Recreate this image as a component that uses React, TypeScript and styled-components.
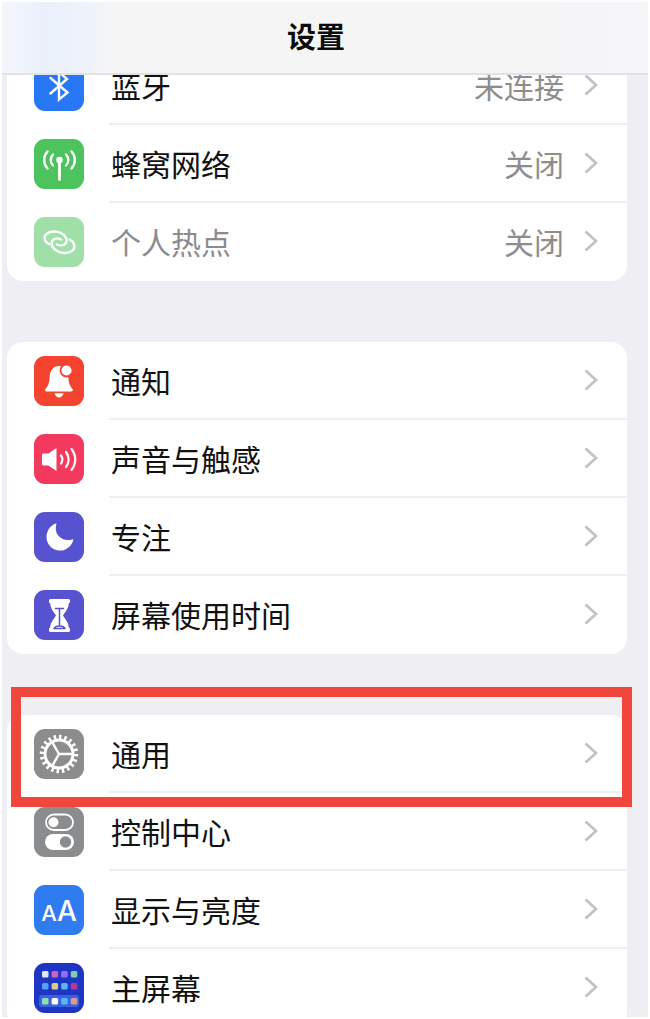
import React from "react";
import styled, { createGlobalStyle } from "styled-components";

const GlobalStyle = createGlobalStyle`
  *, *::before, *::after { box-sizing: border-box; }
  body {
    margin: 0;
    background: #fff;
    color: #111;
    font-family: "Noto Sans CJK SC", "Noto Sans", sans-serif;
  }
`;

const Screen = styled.div`
  display: flex;
  flex-direction: column;
  height: 100vh;
  padding: 2px;
  background: #fff;
`;

const Header = styled.header`
  display: flex;
  align-items: center;
  justify-content: center;
  flex: none;
  height: 73px;
  padding: 0 18px 6px 0;
  border-bottom: 2px solid #e2e2e5;
  background: linear-gradient(90deg, #f4f6fc 0, #ebf1fc 40px, #edf2fb 80px, #f5f5f6 110px, #f5f5f6 82%, #f6f6fa 100%);
`;

const Title = styled.h1`
  margin: 0;
  font-size: 29px;
  line-height: 40px;
  font-weight: 700;
  color: #0c0c0c;
`;

const Content = styled.main`
  flex: 1;
  min-height: 0;
  overflow-y: auto;
  scrollbar-width: none;
  padding: 0 21px 0 5px;
  background: #efeff3;
`;

const Groups = styled.div`
  display: flex;
  flex-direction: column;
  gap: 61px;
  margin-top: -28px;
`;

const Group = styled.ul`
  margin: 0;
  padding: 0;
  list-style: none;
  border-radius: 16px;
  background: #fff;
`;

const Item = styled.li`
  position: relative;
`;

const RowLink = styled.a<{ $dimmed?: boolean }>`
  display: flex;
  align-items: center;
  gap: 25px;
  height: 78px;
  padding-left: 27px;
  color: ${(p) => (p.$dimmed ? "#8b8b8d" : "#111")};
  text-decoration: none;
`;

const RowBody = styled.span<{ $line: boolean }>`
  display: flex;
  align-items: center;
  flex: 1;
  height: 100%;
  padding: 0 29px 0 2px;
  border-bottom: 2px solid ${(p) => (p.$line ? "#efeff1" : "transparent")};
  font-size: 30px;
  line-height: 40px;
`;

const Label = styled.span`
  flex: 1;
`;

const Value = styled.span`
  margin-right: 20px;
  color: #8d8d90;
`;

const Tile = styled.span<{ $color: string }>`
  display: flex;
  align-items: center;
  justify-content: center;
  flex: none;
  width: 50px;
  height: 50px;
  overflow: hidden;
  border-radius: 11px;
  background: ${(p) => p.$color};
  color: #fff;
`;

const Letters = styled.span`
  display: flex;
  align-items: baseline;
  padding-top: 3px;
  font-family: Inter, "Liberation Sans", sans-serif;
  font-size: 28px;
  font-weight: 500;
  line-height: 40px;
`;

const SmallLetter = styled.span`
  font-size: 22px;
`;

const Highlight = styled.div`
  position: absolute;
  inset: -28px -5px -14px 4px;
  z-index: 1;
  border: 10px solid #f0463b;
  pointer-events: none;
`;

const Glyph = ({ children }: { children: React.ReactNode }) => (
  <svg
    width="50"
    height="50"
    viewBox="0 0 50 50"
    fill="none"
    stroke="currentColor"
    strokeWidth="2.4"
    strokeLinecap="round"
    strokeLinejoin="round"
    aria-hidden="true"
  >
    {children}
  </svg>
);

const Chevron = () => (
  <svg width="14" height="22" viewBox="0 0 14 22" fill="none" stroke="#c2c2c4" strokeWidth="2.8" aria-hidden="true">
    <path d="M1.5 1.5 12 11 1.5 20.5" />
  </svg>
);

const BluetoothIcon = () => (
  <Glyph>
    <path d="M16.5 32.5 33 18 25 11v27.500l8.500-7L16.500 17" strokeLinejoin="miter" />
  </Glyph>
);

const CellularIcon = () => (
  <Glyph>
    <circle cx="25.500" cy="21" r="3.300" fill="currentColor" stroke="none" />
    <path d="M25.500 22v18.500" strokeWidth="2.800" />
    <path d="M19 15.500c-3 3-3 8 0 11M32 15.500c3 3 3 8 0 11M13.500 12.500c-4.500 5-4.500 12 0 17M37.500 12.500c4.500 5 4.500 12 0 17" />
  </Glyph>
);

const HotspotIcon = () => (
  <Glyph>
    <path d="M15 27C10 25 9 19.500 13 16.500c4-2.500 10-2.500 14-.5 5 2.500 7 7 4.500 10.500-1.800 2.300-5.500 2.500-8.500 1" />
    <path d="M35.500 22.500c5.500 2.500 6.500 8.500 2.500 11.500-4 2.500-10 2.500-14 .5-5.500-2.500-8-7.500-5.500-11 1.800-2.300 5.500-2.500 8.500-1" />
  </Glyph>
);

const BellIcon = () => (
  <Glyph>
    <path
      d="M25 10c-6 0-9 5-9.300 10.500-.3 6-1.200 9-3.700 11.800-1.600 1.900-.8 3.200 1 3.200h24c1.800 0 2.600-1.300 1-3.200-2.500-2.800-3.400-5.800-3.700-11.800C34 15 31 10 25 10Z"
      fill="currentColor"
      stroke="none"
    />
    <path d="M20.500 37.300h9c-.6 2.700-2.300 4.200-4.500 4.200s-3.900-1.500-4.500-4.200Z" fill="currentColor" stroke="none" />
    <circle cx="32.500" cy="14.500" r="6" fill="currentColor" stroke="#f4432f" strokeWidth="1.800" />
  </Glyph>
);

const SpeakerIcon = () => (
  <Glyph>
    <path d="M9.500 19.500h5l8-5.500v23l-8-5.500h-5c-.8 0-1.500-.7-1.500-1.500v-9c0-.8.7-1.500 1.500-1.500Z" fill="currentColor" stroke="none" />
    <path d="M27 21.500c1.800 2.500 1.800 5.500 0 8M32 18c3.500 4.500 3.500 10.500 0 15M37.500 15c5 6.500 5 14.500 0 21" strokeWidth="2.200" />
  </Glyph>
);

const MoonIcon = () => (
  <Glyph>
    <path
      d="M21.500 11.500c.5-.3 1.100.1.900.7-1.200 4-.7 8.600 2.300 11.900 3.400 3.800 8.700 4.800 13.500 3.300.7-.2 1.300.3 1 1C37 34.500 32 38.500 26 38.500c-7.700 0-13.500-6-13.500-13.500 0-6 3.500-11.300 9-13.500Z"
      fill="currentColor"
      stroke="none"
    />
  </Glyph>
);

const HourglassIcon = () => (
  <Glyph>
    <path
      d="M16.500 9h18c.8 0 1.500.6 1.500 1.500v1.300c0 .8-.5 1.300-1.200 1.600C34.500 19 31 22 29 25.500c2 3.500 5.500 6.500 5.800 12.100.7.300 1.200.8 1.200 1.600v1.300c0 .9-.7 1.500-1.500 1.500h-18c-.8 0-1.500-.6-1.500-1.500v-1.300c0-.8.5-1.300 1.200-1.600.3-5.600 3.800-8.600 5.800-12.100-2-3.500-5.500-6.500-5.800-12.100-.7-.3-1.200-.8-1.200-1.600v-1.300c0-.9.700-1.500 1.500-1.500Z"
      fill="currentColor"
      stroke="none"
    />
    <path d="M21.500 18.500h8M25.500 19v17M20 38.500c1-2 3-2.500 5.500-2.500s4.500.5 5.500 2.500Z" stroke="#5450c8" strokeWidth="1.500" />
  </Glyph>
);

const GearIcon = () => (
  <Glyph>
    <circle cx="25" cy="25" r="14" strokeWidth="3" />
    <circle cx="25" cy="25" r="17" strokeWidth="4.500" strokeLinecap="butt" pathLength="100" strokeDasharray="2.300 2.700" />
    <path d="M25 25h13M25 25l-6.500-11.300M25 25l-6.500 11.300" strokeWidth="2.400" />
  </Glyph>
);

const TogglesIcon = () => (
  <Glyph>
    <rect x="12" y="7.500" width="27" height="15.500" rx="7.750" strokeWidth="1.800" />
    <circle cx="19.500" cy="15.250" r="5" fill="currentColor" stroke="none" />
    <rect x="11" y="27" width="29" height="16" rx="8" fill="currentColor" stroke="none" />
    <circle cx="31.500" cy="35" r="5.700" fill="#8b8c8e" stroke="none" />
  </Glyph>
);

const appRows = [
  { y: 8, colors: ["#dfe6ff", "#d05fc0", "#9a6cf5", "#7fd0a8"] },
  { y: 20, colors: ["#4fa3f7", "#d8cf8a", "#58b8ee", "#b23a8c"] },
  { y: 35, colors: ["#8fe0b0", "#ffffff", "#58b8f5", "#e09a90"] },
];

const HomeScreenIcon = () => (
  <Glyph>
    <rect x="5" y="32" width="40" height="12" rx="3" fill="#3b62df" stroke="none" />
    {appRows.map((row) =>
      row.colors.map((color, i) => (
        <rect key={`${row.y}-${i}`} x={8 + i * 9.6} y={row.y} width="6.500" height="6.500" rx="1.500" fill={color} stroke="none" />
      )),
    )}
  </Glyph>
);

const TextSizeIcon = () => (
  <Letters aria-hidden="true">
    <SmallLetter>A</SmallLetter>
    <span>A</span>
  </Letters>
);

type Setting = {
  id: string;
  label: string;
  color: string;
  icon: React.ReactNode;
  value?: string;
  dimmed?: boolean;
  highlighted?: boolean;
};

const groups: Setting[][] = [
  [
    { id: "bluetooth", label: "蓝牙", color: "#2878f6", icon: <BluetoothIcon />, value: "未连接" },
    { id: "cellular", label: "蜂窝网络", color: "#4cc35c", icon: <CellularIcon />, value: "关闭" },
    { id: "hotspot", label: "个人热点", color: "#a0dfa8", icon: <HotspotIcon />, value: "关闭", dimmed: true },
  ],
  [
    { id: "notifications", label: "通知", color: "#f4432f", icon: <BellIcon /> },
    { id: "sounds", label: "声音与触感", color: "#f33a5e", icon: <SpeakerIcon /> },
    { id: "focus", label: "专注", color: "#5752d0", icon: <MoonIcon /> },
    { id: "screen-time", label: "屏幕使用时间", color: "#5752d0", icon: <HourglassIcon /> },
  ],
  [
    { id: "general", label: "通用", color: "#8b8c8e", icon: <GearIcon />, highlighted: true },
    { id: "control-center", label: "控制中心", color: "#8b8c8e", icon: <TogglesIcon /> },
    { id: "display", label: "显示与亮度", color: "#2f7bf0", icon: <TextSizeIcon /> },
    { id: "home-screen", label: "主屏幕", color: "#1f35c4", icon: <HomeScreenIcon /> },
  ],
];

export default function App() {
  return (
    <>
      <GlobalStyle />
      <Screen>
        <Header>
          <Title>设置</Title>
        </Header>
        <Content>
          <Groups>
            {groups.map((items) => (
              <Group key={items[0].id}>
                {items.map((item, i) => (
                  <Item key={item.id}>
                    <RowLink href={`#${item.id}`} $dimmed={item.dimmed}>
                      <Tile $color={item.color}>{item.icon}</Tile>
                      <RowBody $line={i < items.length - 1}>
                        <Label>{item.label}</Label>
                        {item.value && <Value>{item.value}</Value>}
                        <Chevron />
                      </RowBody>
                    </RowLink>
                    {item.highlighted && <Highlight />}
                  </Item>
                ))}
              </Group>
            ))}
          </Groups>
        </Content>
      </Screen>
    </>
  );
}
